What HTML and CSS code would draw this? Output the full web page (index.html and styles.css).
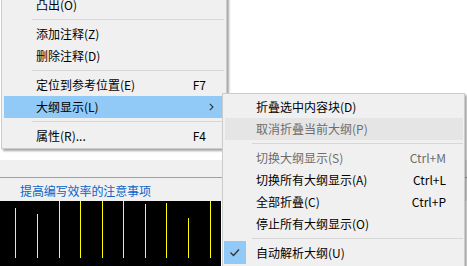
FILE: index.html
```html
<!DOCTYPE html>
<html>
<head>
<meta charset="utf-8">
<link rel="stylesheet" href="styles.css">
</head>
<body>
<div class="screen">
  <div class="doc">
    <div class="blank"></div>
    <div class="toolbar"></div>
    <div class="linkbar"><span class="link">提高编写效率的注意事项</span></div>
    <div class="console">
      <span class="bar" style="height:50px"></span>
      <span class="bar" style="height:44px"></span>
      <span class="bar" style="height:57px"></span>
      <span class="bar" style="height:57px"></span>
      <span class="bar" style="height:57px"></span>
      <span class="bar" style="height:57px"></span>
      <span class="bar" style="height:54px"></span>
      <span class="bar" style="height:55px"></span>
      <span class="bar" style="height:40px"></span>
      <span class="bar" style="height:57px"></span>
    </div>
  </div>

  <div class="menu main-menu">
    <div class="item"><span class="label">凸出(O)</span></div>
    <div class="sep"></div>
    <div class="item"><span class="label">添加注释(Z)</span></div>
    <div class="item"><span class="label">删除注释(D)</span></div>
    <div class="sep"></div>
    <div class="item"><span class="label">定位到参考位置(E)</span><span class="key">F7</span></div>
    <div class="item active"><span class="label">大纲显示(L)</span>
      <svg class="arrow" width="5" height="8" viewBox="0 0 5 8"><polyline points="0.8,0.8 4,4 0.8,7.2" fill="none" stroke="#333" stroke-width="1.1"/></svg>
    </div>
    <div class="sep"></div>
    <div class="item"><span class="label">属性(R)...</span><span class="key">F4</span></div>
  </div>

  <div class="menu sub-menu">
    <div class="item"><span class="label">折叠选中内容块(D)</span></div>
    <div class="item disabled hover"><span class="label">取消折叠当前大纲(P)</span></div>
    <div class="sep"></div>
    <div class="item disabled"><span class="label">切换大纲显示(S)</span><span class="key">Ctrl+M</span></div>
    <div class="item"><span class="label">切换所有大纲显示(A)</span><span class="key">Ctrl+L</span></div>
    <div class="item"><span class="label">全部折叠(C)</span><span class="key">Ctrl+P</span></div>
    <div class="item"><span class="label">停止所有大纲显示(O)</span></div>
    <div class="sep"></div>
    <div class="item checked">
      <span class="check"><svg width="22" height="23" viewBox="0 0 22 23"><polyline points="6.5,11.5 9.5,14.5 15,8.5" fill="none" stroke="#333" stroke-width="1.3"/></svg></span>
      <span class="label">自动解析大纲(U)</span>
    </div>
  </div>
</div>
</body>
</html>
```

FILE: styles.css
```css
html, body {
  margin: 0;
  padding: 0;
}
body {
  width: 467px;
  height: 266px;
  overflow: hidden;
  background: #ffffff;
  font-family: "Noto Sans CJK SC", "Noto Sans", sans-serif;
  font-size: 12px;
}
.screen {
  position: relative;
  width: 467px;
  height: 266px;
  overflow: hidden;
}
.doc {
  display: flex;
  flex-direction: column;
  width: 467px;
}
.blank {
  height: 160px;
  background: #ffffff;
}
.toolbar {
  height: 17px;
  background: #f0f0f0;
  border-bottom: 1px solid #a0a0a0;
}
.linkbar {
  height: 23px;
  background: #f0f0f0;
  padding-left: 20px;
  padding-top: 3px;
  box-sizing: border-box;
  display: flex;
  align-items: center;
}
.link {
  color: #0a64c8;
  font-size: 12px;
  line-height: 14px;
  letter-spacing: -0.1px;
}
.console {
  width: 221px;
  height: 65px;
  background: #000000;
  display: flex;
  align-items: flex-end;
  padding-left: 15px;
  padding-bottom: 8px;
  box-sizing: border-box;
}
.bar {
  width: 1px;
  background: #ffff00;
  display: block;
}
.bar + .bar {
  margin-left: 21px;
}
.bar:nth-child(4),
.bar:nth-child(6),
.bar:nth-child(8) {
  margin-left: 20px;
}

.menu {
  position: absolute;
  background: #f0f0f0;
  border: 1px solid #cccccc;
  box-shadow: 2px 2px 2px rgba(0, 0, 0, 0.35);
  color: #000000;
  display: flex;
  flex-direction: column;
}
.main-menu {
  left: 1px;
  top: -9px;
  width: 218px;
  padding: 2px 4px 1px 2px;
}
.sub-menu {
  left: 222px;
  top: 93px;
  width: 238px;
  padding: 2px 1px 4px 2px;
}
.item {
  height: 22px;
  display: flex;
  align-items: center;
  padding-left: 32px;
  padding-right: 16px;
  line-height: 14px;
  white-space: nowrap;
}
.sub-menu .item {
  padding-left: 31px;
  padding-right: 17px;
}
.label {
  flex: 1;
}
.key {
  text-align: right;
}
.active {
  background: #91c9f7;
}
.arrow {
  margin-right: -8px;
}
.disabled {
  color: #6d6d6d;
}
.hover {
  background: #e5e5e5;
}
.sep {
  height: 7px;
  position: relative;
}
.sep::after {
  content: "";
  position: absolute;
  left: 28px;
  right: -2px;
  top: 3px;
  height: 1px;
  background: #d7d7d7;
}
.sub-menu .sep::after {
  left: 27px;
  right: 0;
}
.sub-menu .item.checked {
  padding-left: 0;
}
.check {
  width: 22px;
  height: 23px;
  margin-left: -1px;
  margin-top: -1px;
  margin-right: 10px;
  background: #91c9f7;
  display: block;
}
.check svg {
  display: block;
}
```
